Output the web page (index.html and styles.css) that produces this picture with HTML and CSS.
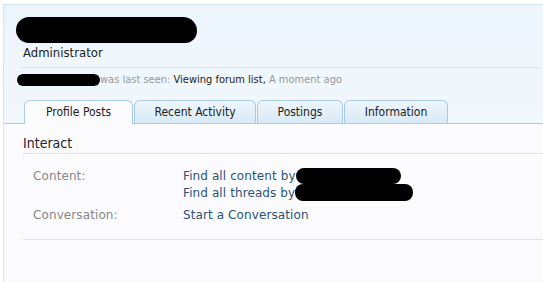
FILE: index.html
```html
<!DOCTYPE html>
<html>
<head>
<meta charset="utf-8">
<link rel="stylesheet" href="styles.css">
</head>
<body>
<div class="profile">
  <div class="header">
    <span class="redact redact-name"></span>
    <div class="role">Administrator</div>
    <div class="divider"></div>
    <div class="status"><span class="redact redact-small"></span><span class="muted">was last seen:</span> Viewing forum list, <span class="muted">A moment ago</span></div>
    <ul class="tabs">
      <li class="tab active">Profile Posts</li>
      <li class="tab">Recent Activity</li>
      <li class="tab">Postings</li>
      <li class="tab">Information</li>
    </ul>
  </div>
  <div class="content">
    <h3 class="section-title">Interact</h3>
    <dl class="pairs">
      <dt>Content:</dt>
      <dd>
        <a class="link">Find all content by<span class="redact redact-c1"></span></a>
        <a class="link">Find all threads by<span class="redact redact-c2"></span></a>
      </dd>
      <dt>Conversation:</dt>
      <dd><a class="link">Start a Conversation</a></dd>
    </dl>
  </div>
</div>
</body>
</html>
```
FILE: styles.css
```css
html, body {
  margin: 0;
  padding: 0;
  background: #ffffff;
}
body {
  font-family: "DejaVu Sans Condensed", "DejaVu Sans", sans-serif;
  font-size: 11px;
  color: #222;
  overflow: hidden;
  height: 282px;
}
.profile {
  margin: 4px 0 0 3px;
  border-top: 1px solid #d3e6f2;
  border-left: 1px solid #d3e6f2;
  background: #fbfbfe;
  height: 277px;
}
.header {
  background: linear-gradient(to bottom, #edf5fc, #f1f7fd);
  padding: 12px 0 0 0;
}
.redact {
  display: inline-block;
  background: #000;
  border-radius: 12px;
}
.redact-name {
  width: 181px;
  height: 26px;
  margin-left: 12px;
  display: block;
  border-radius: 13px 14px 12px 13px;
}
.role {
  margin: 3px 0 0 19px;
  line-height: 14px;
  font-size: 13px;
  color: #222;
}
.divider {
  margin: 7px 3px 0 18px;
  border-top: 1px solid #d6e6f0;
}
.status {
  margin: 5px 0 0 13px;
  line-height: 14px;
  display: flex;
  align-items: center;
  white-space: pre;
  color: #222;
}
.redact-small {
  width: 83px;
  height: 12px;
  border-radius: 6px;
}
.muted {
  color: #999;
}
.tabs {
  list-style: none;
  margin: 13px 0 0 0;
  padding: 0 0 0 20px;
  display: grid;
  grid-template-columns: 109px 122px 86px 104px;
  column-gap: 1px;
  border-bottom: 1px solid #a9cbe3;
}
.tab {
  height: 22px;
  line-height: 23px;
  text-align: center;
  border: 1px solid #a9cbe3;
  border-bottom: none;
  border-radius: 6px 6px 0 0;
  background: linear-gradient(to bottom, #eef6fc, #d7e9f6);
  color: #222;
  font-size: 12px;
}
.tab.active {
  background: #fbfbfe;
  height: 23px;
  margin-bottom: -1px;
}
.content {
  padding: 10px 0 0 19px;
}
.section-title {
  margin: 0;
  font-size: 14px;
  font-weight: normal;
  line-height: 19px;
  color: #222;
  border-bottom: 1px solid #d4e6f0;
  padding: 0;
}
.pairs {
  display: grid;
  grid-template-columns: 150px 1fr;
  row-gap: 6px;
  margin: 0;
  padding: 14px 0 16px 10px;
  border-bottom: 1px solid #d4e6f0;
  line-height: 16px;
  font-family: "DejaVu Sans", sans-serif;
  font-size: 12px;
  letter-spacing: 0.1px;
}
.pairs dt {
  color: #888;
}
.pairs dd {
  margin: 0;
  display: flex;
  flex-direction: column;
}
.link {
  color: #2b5476;
  display: flex;
  align-items: center;
}
.redact-c1 {
  width: 105px;
  height: 16px;
  border-radius: 8px;
}
.redact-c2 {
  width: 118px;
  height: 17px;
  border-radius: 8px;
}
```
